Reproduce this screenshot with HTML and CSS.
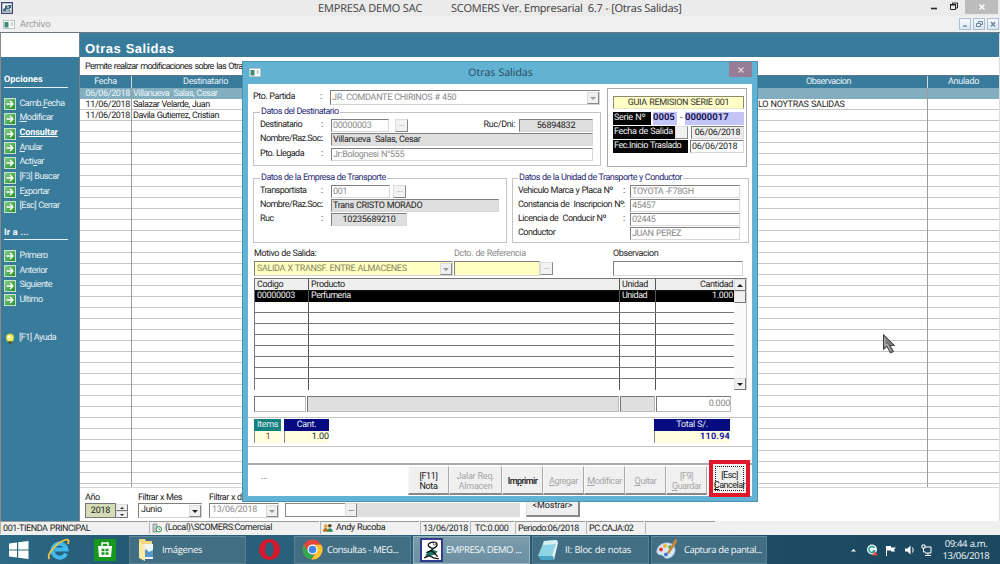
FILE: index.html
```html
<!DOCTYPE html>
<html lang="es">
<head>
<meta charset="utf-8">
<title>SCOMERS - Otras Salidas</title>
<link rel="stylesheet" href="styles.css">
</head>
<body>
<svg class="defs" width="0" height="0">
  <defs>
    <linearGradient id="greenGrad" x1="0" y1="0" x2="1" y2="1"><stop offset="0" stop-color="#8ed08c"/><stop offset="1" stop-color="#1c8a2a"/></linearGradient>
    <symbol id="go" viewBox="0 0 12 12"><rect x=".5" y=".5" width="11" height="11" fill="url(#greenGrad)" stroke="#c4e3c8"/><path d="M2.5 6h6M6 3l3 3-3 3" fill="none" stroke="#fff" stroke-width="1.4"/></symbol>
    <symbol id="form" viewBox="0 0 12 9"><rect x=".5" y=".5" width="11" height="8" fill="#fff" stroke="#b9c4c4"/><rect x="1.500" y="2" width="4" height="5.500" fill="#3d8a78"/><path d="M7.500 3h2.500M7.500 5h2.500" stroke="#99aab5"/></symbol>
    <symbol id="scomers" viewBox="0 0 22 23"><rect x="1" y="1" width="20" height="21" fill="#fff" stroke="#1e2480" stroke-width="1.600"/><path d="M5 18c1-4 4-7 7-7l5 2-3 3-4 1z" fill="#1b7768"/><path d="M13 10c-2 0-6-2-5-4s7-3 8-1-1 4-3 5-3 2-1 3 3 3 5 5M4 19l5-2 4 2 5 1M6 14l5-2" fill="none" stroke="#111" stroke-width="1.300"/><circle cx="14" cy="5.500" r="1.300" fill="#fff" stroke="#222" stroke-width=".7"/></symbol>
  </defs>
</svg>
<div class="screen">
  <header class="titlebar">
    <svg class="app-icon" viewBox="0 0 12 12"><rect x=".7" y=".7" width="10.600" height="10.600" fill="#f7f9fd" stroke="#2c356e" stroke-width="1.200"/><path d="M2 9.500V7l2-1V3.500h3V3h3v3L8 7l2 2.500z" fill="#456a7d"/><path d="M6 5h2M5 8h3" stroke="#fff"/></svg>
    <div class="caption"><span class="cap-a">EMPRESA DEMO SAC</span><span class="cap-b">SCOMERS Ver. Empresarial&nbsp; 6.7 - [Otras Salidas]</span></div>
    <div class="win-controls">
      <svg width="60" height="13" viewBox="0 0 60 13"><path d="M9 8.500h6" stroke="#222" stroke-width="1.600"/><path d="M28.500 5h5v4.500h-5z" fill="none" stroke="#222"/><path d="M28 4.500h6M30.500 4.500v-1.500h5v5h-2" fill="none" stroke="#222"/></svg>
      <span class="close"><svg width="8" height="8" viewBox="0 0 8 8"><path d="M1.500 1.500l5 5m0-5l-5 5" stroke="#fff" stroke-width="1.500"/></svg></span>
    </div>
  </header>
  <nav class="menubar">
    <svg class="menu-icon" viewBox="0 0 12 9"><use href="#form"/></svg>
    <span class="menu-text">Archivo</span>
    <div class="mdi">
      <span><svg viewBox="0 0 12 12"><path d="M4 8h4" stroke="#68859e" stroke-width="1.300"/></svg></span>
      <span><svg viewBox="0 0 12 12"><path d="M3.500 5.500h4v3h-4zM5.500 5V3.500h4v3h-2" fill="none" stroke="#68859e"/></svg></span>
      <span><svg viewBox="0 0 12 12"><path d="M4 4l4 4.500m0-4.500l-4 4.500" stroke="#68859e" stroke-width="1.400"/></svg></span>
    </div>
  </nav>

  <div class="workspace">
    <aside class="sidebar">
      <div class="logo-space"></div>
      <h2 class="side-title first">Opciones</h2>
      <ul class="links">
        <li><svg><use href="#go"/></svg><span>Camb.<u>F</u>echa</span></li>
        <li><svg><use href="#go"/></svg><span><u>M</u>odificar</span></li>
        <li class="current"><svg><use href="#go"/></svg><span>Consultar</span></li>
        <li><svg><use href="#go"/></svg><span><u>A</u>nular</span></li>
        <li><svg><use href="#go"/></svg><span>Acti<u>v</u>ar</span></li>
        <li><svg><use href="#go"/></svg><span>[F3] Buscar</span></li>
        <li><svg><use href="#go"/></svg><span>E<u>x</u>portar</span></li>
        <li><svg><use href="#go"/></svg><span>[Esc] Cerrar</span></li>
      </ul>
      <h2 class="side-title second">Ir a ...</h2>
      <ul class="links">
        <li><svg><use href="#go"/></svg><span>Primero</span></li>
        <li><svg><use href="#go"/></svg><span>Anterior</span></li>
        <li><svg><use href="#go"/></svg><span>Siguiente</span></li>
        <li><svg><use href="#go"/></svg><span>Ultimo</span></li>
      </ul>
      <div class="help"><svg viewBox="0 0 12 12"><circle cx="6" cy="4.800" r="4" fill="#eef06a" stroke="#a8b83c" stroke-width=".8"/><circle cx="5" cy="4" r="1.500" fill="#fffde0"/><rect x="4.200" y="8.200" width="3.600" height="3" rx="1" fill="#4c5b30"/></svg><span>[F1] Ayuda</span></div>
    </aside>
    <main class="content">
      <h1>Otras Salidas</h1>
      <p class="intro">Permite realizar modificaciones sobre las Otras Salidas</p>
      <div class="grid">
        <div class="g-head"><span>Fecha</span><span class="dest">Destinatario</span><span class="obs">Observacion</span><span class="anu">Anulado</span></div>
        <div class="g-row sel"><span class="date">06/06/2018</span><span>Villanueva&nbsp; Salas, Cesar</span><span></span><span></span></div>
        <div class="g-row"><span class="date">11/06/2018</span><span>Salazar Velarde, Juan</span><span class="obs-val">LO NOYTRAS SALIDAS</span><span></span></div>
        <div class="g-row"><span class="date">11/06/2018</span><span>Davila Gutierrez, Cristian</span><span></span><span></span></div>
        <div class="g-empty"><i></i><i></i><i></i><i></i></div>
      </div>
      <div class="filters">
        <label class="f-year">Año<span class="year-row"><b class="year">2018</b><span class="spin"><i class="up"></i><i class="down"></i></span></span></label>
        <label class="f-month">Filtrar x Mes<span class="combo">Junio<i class="arrow"></i></span></label>
        <label class="f-day">Filtrar x dia<span class="combo off">13/06/2018<i class="arrow"></i></span></label>
        <span class="f-search"></span><span class="f-dots">...</span><span class="f-fill"></span>
        <span class="f-show">&lt;Mostrar&gt;</span>
      </div>
    </main>
  </div>

  <footer class="status">
    <span>001-TIENDA PRINCIPAL</span>
    <span class="ico"><svg viewBox="0 0 10 10"><path d="M1 1h4v8H1z" fill="#c3cbd0" stroke="#6f8079" stroke-width=".7"/><circle cx="6.800" cy="6.300" r="2.700" fill="#fff" stroke="#2e8a4c"/><path d="M6.800 4.500v2h1.500" fill="none" stroke="#2e8a4c" stroke-width=".7"/></svg>(Local)\SCOMERS:Comercial</span>
    <span class="ico user"><svg viewBox="0 0 11 10"><circle cx="3" cy="3" r="2" fill="#e0a62d"/><circle cx="7.500" cy="2.500" r="2" fill="#5a4424"/><path d="M0 9c0-5 5-5 6-1v1z" fill="#b3761b"/><path d="M5 9c0-5 5-5 6 0z" fill="#2e875a"/></svg>Andy Rucoba</span>
    <span class="num-s">13/06/2018</span><span class="num-s tc">TC:0.000</span><span>Periodo:06/2018</span><span>PC.CAJA:02</span><span></span><span class="rest"></span>
  </footer>

  <footer class="taskbar">
    <span class="tb-item start"><svg width="20" height="18" viewBox="0 0 20 18"><path d="M0 2.600L8 1.400v7H0zM9.200 1.200L19.500 0v8.400H9.200zM0 9.500h8v7L0 15.400zM9.200 9.500h10.300V18L9.200 16.700z" fill="#fff"/></svg></span>
    <span class="tb-item ie"><svg width="24" height="24" viewBox="0 0 24 24"><path d="M19 15.500a7 7 0 1 1 .5-4H8" fill="none" stroke="#42b9ee" stroke-width="4"/><path d="M2.500 21C-1 17 9 5 18 2c4-1 4 1 3 4" fill="none" stroke="#f2c744" stroke-width="1.800"/></svg></span>
    <span class="tb-item store"><svg width="22" height="22" viewBox="0 0 22 22"><rect width="22" height="22" fill="#16981f"/><path d="M4 7h14l-1 11H5z" fill="#fff"/><path d="M8 7V4h6v3" fill="none" stroke="#fff" stroke-width="1.500"/><path d="M7.500 9.800h3v2.500h-3zM11.500 9.800h3v2.500h-3zM7.500 13.300h3v2.500h-3zM11.500 13.300h3v2.500h-3z" fill="#16981f"/></svg></span>
    <span class="task imgs"><svg width="18" height="24" viewBox="0 0 18 24"><path d="M1 1h6l1 2h6v17H1z" fill="#f3d77c"/><path d="M5 6h10v15H5z" fill="#eef6fa"/><path d="M5 14l3-3 3 3 4-2v7H5z" fill="#5a98c8"/><path d="M1 4l6 4v15l-6-3z" fill="#fbe9a7"/></svg>Imágenes</span>
    <span class="tb-item opera"><svg width="23" height="23" viewBox="0 0 24 24"><path fill-rule="evenodd" d="M12 1a11 11 0 1 0 0 22a11 11 0 1 0 0-22zM12 4.500c6 0 6 15 0 15s-6-15 0-15z" fill="#d9182c"/></svg></span>
    <span class="task chrome"><svg width="21" height="21" viewBox="0 0 22 22"><circle cx="11" cy="11" r="10.500" fill="#e5473a"/><path d="M1.900 5.800A10.500 10.500 0 0 0 10 21.500l4.500-8.500H6.500z" fill="#36a654"/><path d="M20.200 6H11l4 7.300-5 8.200A10.500 10.500 0 0 0 20.200 6z" fill="#fbc52d"/><circle cx="11" cy="11" r="5.200" fill="#fff"/><circle cx="11" cy="11" r="4" fill="#4285e8"/></svg>Consultas - MEG...</span>
    <span class="task active"><svg width="23" height="24" viewBox="0 0 22 23"><use href="#scomers"/></svg>EMPRESA DEMO ...</span>
    <span class="task notes"><svg width="21" height="22" viewBox="0 0 21 22"><path d="M6 2l13-1-4 16H0z" fill="#8ed5e5"/><path d="M6 2l13-1-1 4-13 1z" fill="#d6f1f6"/><path d="M19 1l1 3-4 17-2-4z" fill="#e6f0f2"/><path d="M0 17h15l1 4H3z" fill="#4aa5c2"/></svg>II: Bloc de notas</span>
    <span class="task paint"><svg width="23" height="23" viewBox="0 0 23 23"><path d="M1 12C2 6 10 3 16 6c5 3 4 12-3 14-5 2-5-3-8-3s-5-2-4-5z" fill="#d5e8f6" stroke="#8cb3d0" stroke-width=".7"/><circle cx="5" cy="11.500" r="2" fill="#e23c3c"/><circle cx="9" cy="8" r="2" fill="#f2b42b"/><circle cx="14" cy="9" r="1.800" fill="#46aa47"/><circle cx="10" cy="16.500" r="1.900" fill="#3475d0"/><path d="M11 15L18 3l2-3 1 4-8 12z" fill="#c98438"/></svg>Captura de pantal...</span>
    <span class="tray"><svg width="84" height="14" viewBox="0 0 84 14"><path d="M3 8.500h5L5.500 6z" fill="#fff"/><circle cx="24" cy="6.500" r="5" fill="#f1faf9"/><path d="M26.500 5a3 3 0 1 0 0 3h-2" fill="none" stroke="#1a9a94" stroke-width="1.500"/><path d="M24 12.500l3-4 3 4z" fill="#e24b3b"/><path d="M38.500 3v10" stroke="#fff"/><path d="M39 3h4v1.500h5L46 6.500l1 2h-4V7.500h-4z" fill="#fff"/><path d="M57 5.500h2.500l3-3v9l-3-3H57z" fill="#fff"/><path d="M64.500 4.500q1.500 2.500 0 5" fill="none" stroke="#fff"/><path d="M77 4h6v6h-6M80 10v2M77 12.500h6" fill="none" stroke="#fff"/><path d="M74 2h3v3h-3zM75.500 5v4h2" fill="none" stroke="#fff"/></svg></span>
    <span class="clock"><span>09:44 a.m.</span><span>13/06/2018</span></span>
  </footer>
</div>

<section class="dialog">
  <div class="d-title"><svg viewBox="0 0 12 9"><use href="#form"/></svg><span>Otras Salidas</span><b class="d-close"><svg width="8" height="8" viewBox="0 0 8 8"><path d="M1.500 1.500l5 5m0-5l-5 5" stroke="#e4d3dc" stroke-width="1.200"/></svg></b></div>
  <div class="d-body">
    <div class="top">
      <div class="top-left">
        <div class="row partida"><span class="lbl">Pto. Partida</span><span>:</span><span class="combo off big">JR. COMDANTE CHIRINOS # 450<i class="arrow"></i></span></div>
        <fieldset class="group g1"><legend>Datos del Destinatario</legend>
          <div class="row"><span class="lbl">Destinatario</span><span>:</span><span class="field off w58 dg">00000003</span><i class="btn">...</i><span class="lbl ruc">Ruc/Dni:</span><span class="field grey ctr w74 dg">56894832</span></div>
          <div class="row r2"><span class="lbl">Nombre/Raz.Soc.</span><span>:</span><span class="field grey fill">Villanueva&nbsp; Salas, Cesar</span></div>
          <div class="row r3"><span class="lbl">Pto. Llegada</span><span>:</span><span class="field off fill">Jr:Bolognesi N°555</span></div>
        </fieldset>
      </div>
      <div class="guide">
        <div class="g-name">GUIA REMISION SERIE 001</div>
        <div class="g-line serie"><span class="blk">Serie Nº</span><b>0005</b><em>-</em><b>00000017</b></div>
        <div class="g-line salida"><span class="blk">Fecha de Salida</span><i class="btn"></i><span class="field grey2">06/06/2018</span></div>
        <div class="g-line inicio"><span class="blk">Fec.Inicio Traslado</span><span class="field">06/06/2018</span></div>
      </div>
    </div>
    <div class="mid">
      <fieldset class="group g2"><legend>Datos de la Empresa de Transporte</legend>
        <div class="row"><span class="lbl">Transportista</span><span>:</span><span class="field off w59 dg">001</span><i class="btn near">...</i></div>
        <div class="row r2"><span class="lbl">Nombre/Raz.Soc.</span><span>:</span><span class="field grey fill">Trans CRISTO MORADO</span></div>
        <div class="row r3"><span class="lbl">Ruc</span><span>:</span><span class="field grey ctr w76 dg">10235689210</span></div>
      </fieldset>
      <fieldset class="group g3"><legend>Datos de la Unidad de Transporte y Conductor</legend>
        <div class="row"><span class="lbl">Vehiculo Marca y Placa Nº</span><span>:</span><span class="field off fill">TOYOTA -F78GH</span></div>
        <div class="row"><span class="lbl">Constancia de&nbsp; Inscripcion Nº</span><span>:</span><span class="field off fill">45457</span></div>
        <div class="row"><span class="lbl">Licencia de&nbsp; Conducir Nº</span><span>:</span><span class="field off fill">02445</span></div>
        <div class="row"><span class="lbl">Conductor</span><span></span><span class="field off fill">JUAN PEREZ</span></div>
      </fieldset>
    </div>
    <div class="reason">
      <label>Motivo de Salida:<span class="combo off yellow">SALIDA X TRANSF. ENTRE ALMACENES<i class="arrow"></i></span></label>
      <label class="ref">Dcto. de Referencia<span class="ref-box"><span class="field yellow"></span><i class="btn">...</i></span></label>
      <label class="ob">Observacion<span class="field"></span></label>
    </div>
    <div class="items">
      <div class="i-table">
        <div class="i-row head"><span>Codigo</span><span>Producto</span><span>Unidad</span><span>Cantidad</span></div>
        <div class="i-row sel"><span class="dg">00000003</span><span>Perfumeria</span><span>Unidad</span><span class="dg">1.000</span></div>
        <div class="i-row"><span></span><span></span><span></span><span></span></div>
        <div class="i-row"><span></span><span></span><span></span><span></span></div>
        <div class="i-row"><span></span><span></span><span></span><span></span></div>
        <div class="i-row"><span></span><span></span><span></span><span></span></div>
        <div class="i-row"><span></span><span></span><span></span><span></span></div>
        <div class="i-row"><span></span><span></span><span></span><span></span></div>
        <div class="i-row"><span></span><span></span><span></span><span></span></div>
        <div class="i-row last"><span></span><span></span><span></span><span></span></div>
      </div>
      <div class="scroll"><i class="s-up"></i><i class="thumb"></i><i class="s-down"></i></div>
    </div>
    <div class="entry"><span></span><span class="g"></span><span class="g"></span><span class="num dg">0.000</span></div>
    <div class="totals">
      <div class="tot items-n"><span>Items</span><span>1</span></div>
      <div class="tot cant"><span>Cant.</span><span>1.00</span></div>
      <div class="tot total"><span>Total S/.</span><b>110.94</b></div>
    </div>
    <div class="actions">
      <span class="dots">...</span>
      <button class="on">[F11]<br>Nota</button><button class="wide">Jalar Req.<br>Almacen</button><button class="on bold">Im<u>p</u>rimir</button><button><span><u>A</u>gregar</span></button><button><span><u>M</u>odificar</span></button><button><span><u>Q</u>uitar</span></button><button>[F9]<br><u>G</u>uardar</button><button class="on cancel">[Esc]<br><u>C</u>ancelar</button>
    </div>
  </div>
</section>
<svg class="cursor" width="14" height="22" viewBox="0 0 14 22"><path d="M1.500 1.500v15l3.500-3 3.500 6.500 3-1.500-3.500-6h4.500z" fill="#777" stroke="#444" stroke-width="1"/><path d="M3 5v8l2-2 4 7" fill="none" stroke="#c5c5c5" stroke-width=".9"/></svg>
</body>
</html>
```

FILE: styles.css
```css
* { box-sizing: border-box; }
body { margin: 0; width: 1000px; height: 564px; overflow: hidden; position: relative; background: #f0f0f0; color: #1c1c1c; font: 9px/11px Roboto, "Liberation Sans", sans-serif; letter-spacing: -0.48px; word-spacing: .4px; text-rendering: geometricPrecision; white-space: nowrap; }
ul, h1, h2, p, fieldset { margin: 0; padding: 0; border: 0; list-style: none; }
i, em { font-style: normal; }
svg { display: block; flex: none; }
.defs { position: absolute; }
.dg { letter-spacing: -.25px; }
.screen { display: flex; flex-direction: column; height: 564px; }

/* window chrome */
.titlebar { height: 16px; display: flex; background: #ebebeb; padding-left: 1px; word-spacing: 0; }
.app-icon { width: 12px; height: 12px; margin-top: 2px; }
.caption { flex: 1; padding-left: 305px; display: flex; font: 11px/18px "Open Sans", sans-serif; color: #3a3a3a; letter-spacing: -.15px; }
.cap-a { width: 133px; }
.cap-b { letter-spacing: -.24px; }
.win-controls { display: flex; }
.win-controls > svg { margin-right: -17px; width: 60px; }
.close { width: 33px; height: 14px; margin-right: 2px; background: #bcbcbc; display: flex; align-items: center; justify-content: center; position: relative; }
.menubar { height: 16px; display: flex; align-items: center; background: #f0f0f0; padding: 0 0 0 3px; }
.menu-icon { width: 12px; height: 9px; }
.menu-text { margin-left: 5px; flex: 1; color: #9b9b9b; font: 9px/14px "DejaVu Sans", sans-serif; letter-spacing: -.5px; padding-top: 1px; }
.mdi { display: flex; gap: 2px; margin-right: 1px; }
.mdi span { width: 12px; height: 12px; background: linear-gradient(#f5f9fd, #dbe7f4); border: 1px solid #a9bfd6; }
.mdi svg { width: 12px; height: 12px; margin: -1px; }

/* sidebar */
.workspace { height: 489px; display: flex; border-top: 1px solid #6d7a82; border-left: 1px solid #8a8a8a; }
.sidebar { width: 79px; background: #387b9b; border-right: 1px solid #74828b; color: #e6f0f4; padding-left: 3px; letter-spacing: -.52px; }
.logo-space { height: 24px; margin-left: -3px; background: #fff; }
.side-title { width: 64px; border-bottom: 1px solid #e8f1f5; font: bold 9px/12px Roboto, sans-serif; letter-spacing: .1px; color: #fff; height: 14px; }
.first { margin: 17px 0 9px; }
.second { margin: 13px 0 9px; height: 13px; }
.links li { display: flex; align-items: center; height: 14.65px; }
.links svg { width: 12px; height: 12px; margin-right: 3.500px; }
.links .current { font-weight: bold; color: #fff; text-decoration: underline; letter-spacing: -.1px; }
.help { display: flex; align-items: center; margin-top: 24px; height: 14px; }
.help svg { width: 12px; height: 12px; margin-right: 3px; }

/* listing */
.content { flex: 1; background: #fff; display: flex; flex-direction: column; border-right: 1px solid #ddd; }
h1 { height: 24px; background: #387b9b; color: #fff; font: bold 13px/31px "Liberation Sans", sans-serif; letter-spacing: .45px; padding-left: 5px; }
.intro { height: 18px; line-height: 21px; padding-left: 5px; letter-spacing: -.7px; word-spacing: 1px; }
.grid { height: 413px; display: flex; flex-direction: column; border-bottom: 1px solid #d5d5d5; }
.g-head, .g-row, .g-empty { display: grid; grid-template-columns: 52px 420px 376px 1fr; flex: none; }
.g-head { height: 13px; background: #387b9b; color: #e9f2f5; text-align: center; line-height: 13px; border-top: 1px solid #60788a; letter-spacing: -.3px; }
.g-head span, .g-row span { border-right: 1px solid #9c9c9c; }
.g-head span { border-color: #d0dbe0; }
.g-head .dest { padding-right: 272px; }
.g-head .obs { text-align: right; padding-right: 76px; letter-spacing: -.45px; }
.g-row { height: 11px; border-bottom: 1px solid #c6c6c6; line-height: 12px; }
.g-row span { padding-left: 1px; }
.g-row .date { text-align: right; padding-right: 1px; letter-spacing: -.35px; }
.g-row .obs-val { padding-left: 206px; letter-spacing: -.28px; }
.g-row.sel { background: #82aec0; color: #edf5f8; border-color: #82aec0; }
.g-empty { flex: 1; background: repeating-linear-gradient(#fff 0 10px, #c6c6c6 10px 11px); }
.g-empty i { border-right: 1px solid #9c9c9c; }
.g-head span:last-child, .g-row span:last-child, .g-empty i:last-child { border-right: 0; }
.filters { height: 32px; display: flex; padding: 5px 0 0 5px; line-height: 10px; overflow: hidden; }
.filters label { height: 26px; display: flex; flex-direction: column; }
.filters .combo { height: 15px; line-height: 13px; letter-spacing: -.3px; }
.f-year { width: 53px; }
.year-row { display: flex; }
.year { width: 31px; height: 15px; background: #d6dcb8; border: 1px solid #777; font-weight: normal; line-height: 14px; text-align: center; letter-spacing: -.2px; }
.spin { display: flex; flex-direction: column; margin-top: 1px; }
.spin i { width: 12px; height: 7px; background: #f0f0f0; border: 1px solid #ddd; border-right-color: #777; border-bottom-color: #777; padding: 2px 3px; }
.spin i::after, .arrow::after, .scroll .s-up::after, .scroll .s-down::after { content: ""; display: block; border: 3px solid transparent; border-top-color: #222; border-bottom: 0; }
.spin i::after { border-width: 2px; border-bottom: 0; }
.spin .up::after, .scroll .s-up::after { transform: rotate(180deg); }
.f-month .combo { width: 64px; margin-right: 7px; }
.f-day .combo { width: 70px; margin-right: 6px; }
.f-search { width: 60px; height: 14px; margin-top: 10px; border: 1px solid #888; border-right: 0; }
.f-dots { width: 12px; height: 14px; margin-top: 10px; background: #f0f0f0; border: 1px solid #ddd; border-right-color: #888; border-bottom-color: #888; text-align: center; }
.f-fill { width: 163px; height: 14px; margin-top: 10px; background: #dedede; }
.f-show { width: 54px; height: 23px; margin: 1px 0 0 6px; background: #f0f0f0; border: 1px solid #ddd; border-right: 2px solid #888; border-bottom: 2px solid #888; text-align: center; line-height: 22px; letter-spacing: -.1px; }

/* status */
.status { height: 14px; display: grid; grid-template-columns: 148px 170px 99px 49px 44px 70px 58px 70px 1fr; gap: 1px; background: #f0f0f0; line-height: 14px; letter-spacing: -.42px; }
.status span { border-top: 1px solid #999; border-left: 1px solid #b5b5b5; padding-left: 2px; height: 13px; }
.status .ico { display: flex; gap: 3px; align-items: center; letter-spacing: -.35px; }
.status .ico svg { width: 10px; height: 10px; }
.status .num-s { letter-spacing: -.3px; padding-left: 2px; }
.status .tc { padding-left: 4px; }
.status .rest { border: 0; }

/* taskbar */
.taskbar { height: 29px; display: flex; align-items: center; background: linear-gradient(90deg, #2d6a85, #255a75 12%, #2c637c 35%, #275870 60%, #1c4a62 80%, #1c4960); color: #f3f7f9; font: 9.500px/12px "Open Sans", sans-serif; letter-spacing: -.5px; overflow: hidden; }
.tb-item { display: flex; justify-content: center; flex: none; }
.start { width: 37px; } .ie { width: 44px; } .store { width: 48px; }
.task { display: flex; align-items: center; gap: 4px; width: 117px; height: 28px; background: #426e83; border: 1px solid #587f93; border-top-color: #6389a0; margin-right: 2px; padding-left: 8px; flex: none; }
.imgs { gap: 6px; letter-spacing: -.35px; }
.opera { width: 46px; padding-right: 3px; }
.chrome { padding-left: 7px; }
.active { background: linear-gradient(#7b9cac, #6a8fa2); border-color: #9ab5c2; gap: 3px; padding-left: 6px; }
.notes { gap: 6px; padding-left: 5px; letter-spacing: -.3px; }
.task.paint { padding-left: 4px; gap: 5px; width: 116px; }
.tray { margin-left: 79px; }
.clock { flex: 1; text-align: center; display: flex; flex-direction: column; letter-spacing: -.35px; }

/* dialog */
.dialog { position: absolute; left: 242px; top: 61px; width: 516px; height: 441px; background: #61b2d3; border: 1px solid #4a93b3; padding: 0 5px 5px; }
.d-title { height: 22px; display: flex; align-items: flex-start; }
.d-title > svg { width: 12px; height: 9px; margin: 6px 0 0 1px; }
.d-title > span { flex: 1; text-align: center; padding-left: 11px; font: 10.500px/23px "Open Sans", sans-serif; color: #2a4653; letter-spacing: 0; }
.d-close { width: 23px; height: 15px; background: #967c94; display: flex; align-items: center; justify-content: center; }
.d-body { height: 412px; background: #fff; display: flex; flex-direction: column; }
.row { display: flex; height: 12px; align-items: center; }
.lbl { width: 67px; flex: none; }
.row > span:nth-child(2) { width: 10px; flex: none; }
.field { border: 1px solid #d8d8d8; border-top-color: #7f7f7f; border-left-color: #7f7f7f; background: #fff; height: 13px; line-height: 13px; padding: 0 1px; overflow: hidden; flex: none; }
.row .field.off, .row .field.grey { letter-spacing: -.35px; }
.row .field.dg { letter-spacing: -.25px; }
.off { color: #8b8b8b; }
.row .field.grey, .grey { background: #dfdfdf; }
.grey2 { background: #ededed; }
.row .fill { flex: 1; }
.ctr { text-align: center; }
.w58 { width: 58px; } .w59 { width: 59px; } .w74 { width: 74px; } .w76 { width: 76px; }
.btn { width: 13px; height: 13px; background: #f2f2f2; border: 1px solid #ddd; border-right-color: #888; border-bottom-color: #888; color: #aaa; text-align: center; line-height: 8px; flex: none; margin-left: 6px; }
.btn.near { margin-left: 3px; }
.combo { display: flex; justify-content: space-between; align-items: center; height: 15px; border: 1px solid #d4d4d4; border-top-color: #7f7f7f; border-left-color: #7f7f7f; padding-left: 2px; background: #fff; }
.arrow { width: 12px; height: 12px; background: #f0f0f0; border: 1px solid #ddd; border-right-color: #888; border-bottom-color: #888; padding: 4px 2px; }
.off .arrow::after { border-top-color: #999; }
.group { border: 1px solid #c2c2c2; position: relative; min-width: 0; }
legend { color: #2b2b75; padding: 0 1px; margin-left: 0; line-height: 11px; height: 11px; letter-spacing: -.53px; }
.top { height: 89px; display: flex; padding: 4px 4px 0 5px; }
.top-left { width: 348px; margin-right: 6px; }
.partida { height: 15px; margin-top: 2px; }
.partida .big { flex: 1; margin-right: 1px; letter-spacing: -.33px; padding-left: 1px; line-height: 16px; }
.g1 { height: 59px; margin-top: 2px; padding: 0 7px 0 6px; }
.g1 .lbl, .g2 .lbl { width: 61px; letter-spacing: -.54px; }
.g1 .row, .g2 .row { height: 14px; }
.g1 .r2, .g1 .r3 { height: 15px; }
.g1 .ruc { width: auto; flex: 1; text-align: right; padding-right: 4px; letter-spacing: -.35px; }
.guide { width: 140px; height: 79px; border: 1px solid #aaa; padding: 7px 2px 0 5px; }
.g-name { height: 13px; background: #ffffc6; border: 1px solid #8b8b70; border-bottom-color: #e8e8c0; text-align: center; line-height: 13px; letter-spacing: -.3px; color: #333; }
.g-line { display: flex; height: 12px; line-height: 12px; margin-top: 2px; letter-spacing: -.25px; }
.g-line.serie { margin-top: 3px; }
.g-line .blk { background: #050505; color: #eee; padding-left: 1px; height: 13px; }
.serie .blk { width: 38px; margin-right: 2px; }
.serie b { background: #c5c4f8; color: #15154f; width: 24px; height: 13px; font-size: 9.500px; letter-spacing: 0; }
.serie em { width: 8px; text-align: center; }
.serie b:last-child { flex: 1; letter-spacing: 0; padding-left: 0; }
.salida .blk { width: 62px; letter-spacing: -.34px; } .salida .btn { margin-left: 0; }
.salida .field { flex: 1; margin-left: 3px; text-align: center; }
.inicio .blk { width: 75px; margin-right: 2px; letter-spacing: -.44px; }
.inicio .field { flex: 1; }
.mid { height: 72px; display: flex; padding: 0 3px 0 5px; justify-content: space-between; }
.g2 { width: 254px; height: 70px; padding: 0 7px 0 6px; }
.g2 .r2, .g2 .r3 { height: 14.500px; }
.g3 { width: 237px; height: 70px; padding: 0 8px 0 5px; }
.g3 .row { height: 14.100px; }
.g3 .lbl { width: 105px; letter-spacing: -.5px; }
.g3 .row > span:nth-child(2) { width: 7px; }
.reason { height: 33px; display: flex; padding: 2px 0 0 6px; flex: none; }
.reason label { display: flex; flex-direction: column; width: 199px; line-height: 14px; letter-spacing: -.42px; }
.reason .combo, .reason .field { height: 15px; line-height: 14px; }
.reason .combo { letter-spacing: -.35px; }
.reason .yellow { background: #ffffc2; color: #88885f; }
.reason .ref { width: 98px; margin-left: 1px; color: #8c8c8c; letter-spacing: -.37px; }
.ref-box { display: flex; }
.ref-box .field { width: 86px; } .ref-box .btn { margin: 1px 0 0; }
.reason .ob { width: 130px; margin-left: 61px; }
.items { height: 112px; display: flex; margin: 0 5px 0 6px; border: 1px solid #777; border-bottom: 0; border-right-color: #ccc; flex: none; }
.i-table { flex: 1; }
.i-row { display: grid; grid-template-columns: 54px 311px 36px 1fr; height: 11px; line-height: 11px; border-bottom: 1px solid #777; }
.i-row span { border-right: 1px solid #555; padding-left: 2px; }
.i-row:not(.head) .dg { letter-spacing: -.3px; }
.i-row span:last-child { text-align: right; padding-right: 1px; }
.i-row span:last-child { border-right: 0; }
.head { background: #efefef; height: 12px; line-height: 13px; border-bottom-color: #111; letter-spacing: -.35px; }
.i-row.sel { background: #000; color: #eee; border-color: #000; }
.i-row.last { border-bottom: 0; height: 11px; }
.scroll { width: 12px; background: #fafafa; display: flex; flex-direction: column; }
.scroll i { height: 12px; background: #f0f0f0; border: 1px solid #ddd; border-right-color: #777; border-bottom-color: #777; padding: 4px 2px; }
.scroll .s-down { margin-top: auto; }
.entry { display: grid; grid-template-columns: 52px 312px 35px 75px; gap: 1px; height: 14px; margin: 6px 0 0 6px; flex: none; line-height: 14px; color: #888; }
.entry span { border: 1px solid #bbb; border-top-color: #777; border-left-color: #777; }
.entry .g { background: #dfdfdf; }
.num { text-align: right; }
.totals { display: flex; height: 30px; border: 1px solid #c4c4c4; border-width: 1px 0; margin-top: 7px; padding: 1px 0 0 6px; flex: none; }
.tot { display: flex; flex-direction: column; line-height: 12px; letter-spacing: -.3px; }
.tot > :first-child { height: 12px; line-height: 13px; color: #e2eeee; text-align: center; background: #060b80; }
.tot > :last-child { height: 12px; line-height: 13px; background: #ffffdf; border-left: 1px solid #888; text-align: right; letter-spacing: -.1px; }
.items-n { width: 27px; margin-right: 3px; }
.items-n > :first-child { background: #138181; }
.tot.items-n > :last-child { text-align: center; color: #7a4022; }
.cant { width: 45px; }
.total { width: 76px; margin-left: auto; margin-right: 22px; }
.total b:last-child { color: #1414a8; letter-spacing: .25px; }
.actions { display: flex; align-items: flex-start; height: 33px; border-top: 2px solid #aaa; margin-top: auto; padding: 1px 2px 0 13px; flex: none; }
.dots { flex: 1; line-height: 22px; color: #755; letter-spacing: -.1px; }
.actions button { width: 41px; height: 29px; padding: 2px 0 0; background: #f0f0f0; border: 1px solid #f8f8f8; border-right-color: #aaa; border-bottom: 2px solid #888; color: #a5a5a5; font: 9px/10px Roboto, sans-serif; letter-spacing: -.4px; flex: none; }
.actions button.wide { width: 53px; letter-spacing: -.2px; }
.actions button.on { color: #161616; }
.actions button.bold { font-weight: 500; letter-spacing: -.6px; }
.actions button.cancel { width: 41px; height: 37px; margin: -6px 0 0 2px; border: 4px solid #e0182b; outline: 1px dotted #222; outline-offset: -7px; letter-spacing: -.5px; }
.cursor { position: absolute; left: 882px; top: 333px; }
```
